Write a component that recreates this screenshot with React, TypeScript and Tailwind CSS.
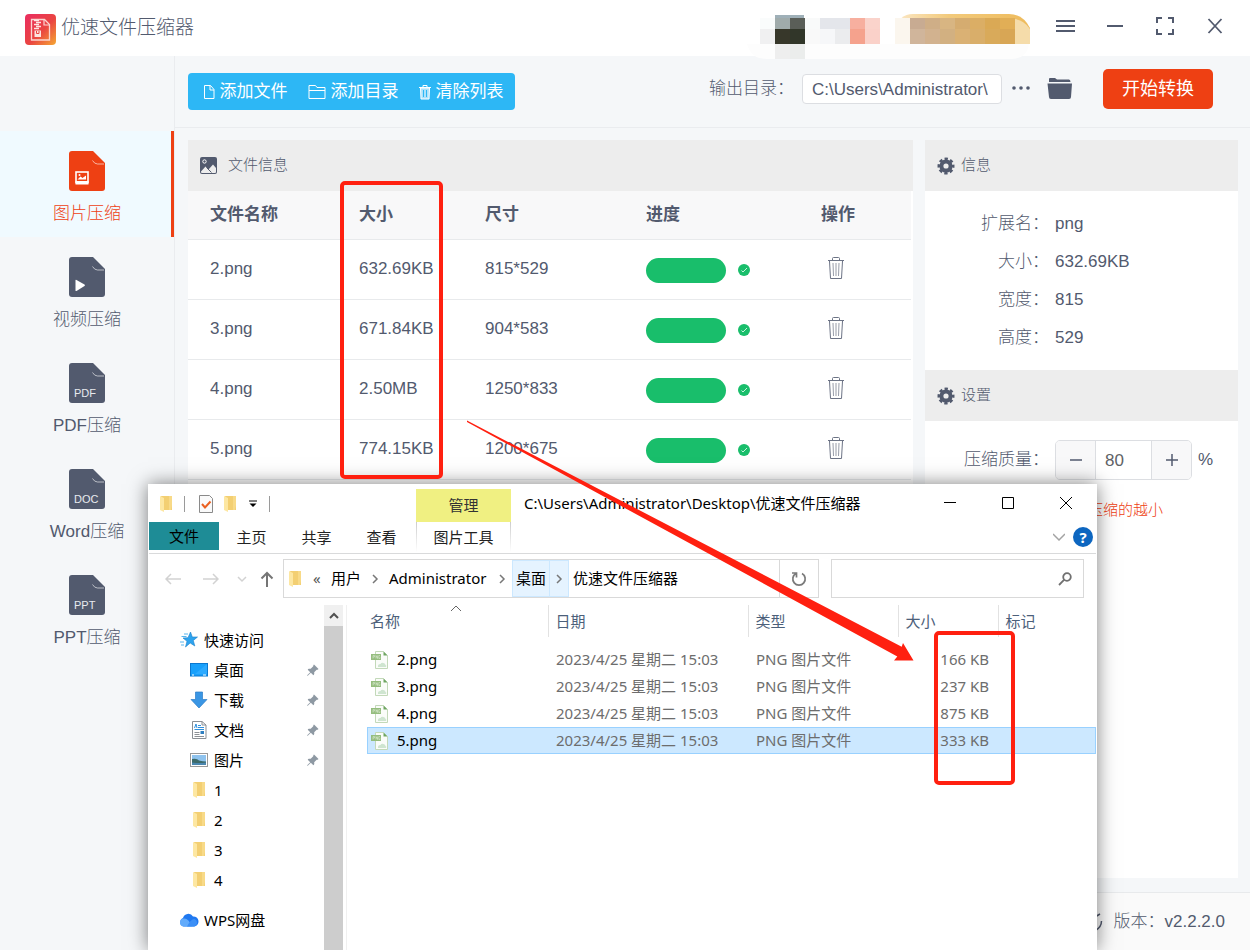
import type { ReactNode } from "react";
import { BsPinAngleFill } from "react-icons/bs";

const APP_FONT = "font-['Liberation_Sans','Noto_Sans_CJK_SC',sans-serif]";
const EXPLORER_FONT = "font-['Noto_Sans','Noto_Sans_CJK_SC',sans-serif]";

const NAV_ITEMS = [
  { label: "图片压缩", kind: "image", active: true },
  { label: "视频压缩", kind: "video", active: false },
  { label: "PDF压缩", kind: "PDF", active: false },
  { label: "Word压缩", kind: "DOC", active: false },
  { label: "PPT压缩", kind: "PPT", active: false },
];

const FILES = [
  { name: "2.png", size: "632.69KB", dims: "815*529" },
  { name: "3.png", size: "671.84KB", dims: "904*583" },
  { name: "4.png", size: "2.50MB", dims: "1250*833" },
  { name: "5.png", size: "774.15KB", dims: "1200*675" },
];

const INFO = [
  { label: "扩展名：", value: "png" },
  { label: "大小：", value: "632.69KB" },
  { label: "宽度：", value: "815" },
  { label: "高度：", value: "529" },
];

const RESULTS = [
  { name: "2.png", size: "166 KB", selected: false },
  { name: "3.png", size: "237 KB", selected: false },
  { name: "4.png", size: "875 KB", selected: false },
  { name: "5.png", size: "333 KB", selected: true },
];

const MOSAIC = [
  { x: 15, y: 4, w: 15, h: 11, c: "#fafcfc" },
  { x: 30, y: 4, w: 15, h: 11, c: "#a0abab" },
  { x: 45, y: 4, w: 15, h: 11, c: "#5a5e58" },
  { x: 60, y: 4, w: 15, h: 11, c: "#f9fafa" },
  { x: 75, y: 4, w: 30, h: 11, c: "#e4e6eb" },
  { x: 105, y: 4, w: 15, h: 11, c: "#f7af9f" },
  { x: 120, y: 4, w: 15, h: 11, c: "#fad3cb" },
  { x: 15, y: 15, w: 15, h: 15, c: "#f0f0f1" },
  { x: 30, y: 15, w: 15, h: 15, c: "#37372a" },
  { x: 45, y: 15, w: 15, h: 15, c: "#313629" },
  { x: 60, y: 15, w: 15, h: 15, c: "#f9f9f9" },
  { x: 75, y: 15, w: 15, h: 15, c: "#f6f7f9" },
  { x: 90, y: 15, w: 15, h: 15, c: "#ebecee" },
  { x: 105, y: 15, w: 15, h: 15, c: "#f5a28d" },
  { x: 120, y: 15, w: 15, h: 15, c: "#fad1c9" },
  { x: 30, y: 30, w: 15, h: 15, c: "#eeeeee" },
  { x: 45, y: 30, w: 15, h: 15, c: "#ebedec" },
  { x: 150, y: 4, w: 15, h: 26, c: "#fbf6ee" },
  { x: 165, y: 4, w: 15, h: 11, c: "#c8ab92" },
  { x: 180, y: 4, w: 15, h: 11, c: "#cfae87" },
  { x: 195, y: 4, w: 15, h: 11, c: "#d8b582" },
  { x: 210, y: 4, w: 15, h: 11, c: "#d5ac70" },
  { x: 225, y: 4, w: 15, h: 11, c: "#dbae65" },
  { x: 240, y: 4, w: 15, h: 11, c: "#daa955" },
  { x: 255, y: 4, w: 15, h: 11, c: "#e1ae56" },
  { x: 165, y: 15, w: 15, h: 15, c: "#d0b59b" },
  { x: 180, y: 15, w: 15, h: 15, c: "#d2b28f" },
  { x: 195, y: 15, w: 15, h: 15, c: "#d2b081" },
  { x: 210, y: 15, w: 15, h: 15, c: "#dab174" },
  { x: 225, y: 15, w: 15, h: 15, c: "#d9ae6a" },
  { x: 240, y: 15, w: 15, h: 15, c: "#d9aa5a" },
  { x: 255, y: 15, w: 15, h: 15, c: "#d8a655" },
];

function Logo() {
  return (
    <svg width="31" height="31" viewBox="0 0 31 31" aria-hidden="true">
      <defs>
        <linearGradient id="logo" x1="0" y1="0" x2="1" y2="1">
          <stop offset="0.1" stopColor="#ea315c" />
          <stop offset="0.55" stopColor="#ea4541" />
          <stop offset="1" stopColor="#f5a833" />
        </linearGradient>
      </defs>
      <rect width="31" height="31" rx="4" fill="url(#logo)" />
      <path d="M6.500 5.500h13l5 5v15.500h-18z" fill="none" stroke="#fbd5d0" strokeWidth="1.300" />
      <path d="M19 5.500v5.500h5.500" fill="none" stroke="#fbd5d0" strokeWidth="1.200" />
      <path d="M9 6.500h5M11 8.500h5M9 10.500h5M11 12.500h5M9 14.500h5" stroke="#fde4e0" strokeWidth="1.400" />
      <path d="M9.500 16.500h6.500v6.500h-6.500z" fill="#fde4e0" />
      <path d="M11.500 17v2.500h2.500V17" fill="none" stroke="#ea4541" />
    </svg>
  );
}

function AccountMosaic() {
  return (
    <svg width="290" height="48" viewBox="0 0 290 48" className="shrink-0" aria-hidden="true">
      <defs>
        <linearGradient id="vip" x1="0" x2="1">
          <stop offset="0" stopColor="#fbe8c8" />
          <stop offset="0.4" stopColor="#f2ca7c" />
          <stop offset="1" stopColor="#eebb5c" />
        </linearGradient>
      </defs>
      <path d="M2 30h282q-2 15-18 15H22Q6 45 2 30z" fill="#fdfdfd" />
      <path d="M150 16Q154 0 168 0h96q14 0 21 14v16H150z" fill="url(#vip)" />
      <rect x="30" y="1" width="29" height="4" fill="#9fb0b8" />
      {MOSAIC.map((m) => (
        <rect key={`${m.x}-${m.y}`} x={m.x} y={m.y} width={m.w} height={m.h} fill={m.c} shapeRendering="crispEdges" />
      ))}
      <path d="M270 5q9 1 15 10v15h-15z" fill="#f5dcaa" />
    </svg>
  );
}

function NavIcon({ kind, active }: { kind: string; active: boolean }) {
  return (
    <svg width="36" height="40" viewBox="0 0 36 40" aria-hidden="true">
      <path
        d="M3 0h21l12 12v25a3 3 0 0 1-3 3H3a3 3 0 0 1-3-3V3a3 3 0 0 1 3-3z"
        fill={active ? "#ee4013" : "#525a6e"}
      />
      <path d="M23.500 9.500q2 3.500 5 3.500h6.500" fill="none" stroke="#fff" strokeOpacity="0.600" />
      {kind === "image" && (
        <>
          <rect x="7" y="21" width="12" height="10.500" fill="none" stroke="#fff" strokeWidth="1.600" />
          <rect x="6.500" y="30" width="13" height="3.500" fill="#fff" />
          <path d="M8.500 28.500l3-3 2 1.500 3.500-2.500v4z" fill="#fff" />
          <circle cx="10.500" cy="24" r="1" fill="#fff" />
        </>
      )}
      {kind === "video" && <path d="M6.500 23.500q0-1 1-.5l8 4.500q1 .7 0 1.400l-8 5q-1 .4-1-.5z" fill="#fff" />}
      {kind.length === 3 && (
        <text x="5" y="34" fontSize="11" fill="#e8eaee">
          {kind}
        </text>
      )}
    </svg>
  );
}

function FileIcon() {
  return (
    <svg width="12" height="16" viewBox="0 0 12 16" fill="none" stroke="currentColor" aria-hidden="true">
      <path d="M1.500 1.500h6l3.500 4v9h-9.500zM7 1.500v4.500h4" />
    </svg>
  );
}

function FolderLineIcon() {
  return (
    <svg width="18" height="16" viewBox="0 0 18 16" fill="none" stroke="currentColor" aria-hidden="true">
      <path d="M1 1.500h6.500l1.500 2h8v11H1zM1 6.500h16" />
    </svg>
  );
}

function ClearIcon() {
  return (
    <svg width="12" height="16" viewBox="0 0 12 16" fill="none" stroke="currentColor" aria-hidden="true">
      <path d="M0 3.500h12M4 3.500v-2h4v2" />
      <path d="M1.500 4h9l-.5 11H2z" fill="currentColor" fillOpacity="0.600" />
      <path d="M4.500 6v7M7.500 6v7" stroke="#2db7f5" />
    </svg>
  );
}

function TrashIcon() {
  return (
    <svg width="18" height="24" viewBox="0 0 18 24" fill="none" stroke="#6c7385" aria-hidden="true">
      <path d="M1 4.500h16M5.500 4V2.500q0-1 1-1h5q1 0 1 1V4M2.500 5l1 17.500h11l1-17.500" />
      <path d="M6 7l.5 13M9 7v13M12 7l-.5 13" strokeOpacity="0.700" />
    </svg>
  );
}

function DoneIcon() {
  return (
    <svg width="12" height="12" viewBox="0 0 12 12" aria-hidden="true">
      <circle cx="6" cy="6" r="6" fill="#19be6b" />
      <path d="M3.500 6.500l1.500 1.500 4-4" fill="none" stroke="#c9f2dc" />
    </svg>
  );
}

function GearIcon() {
  return (
    <svg width="18" height="18" viewBox="0 0 18 18" fill="none" stroke="currentColor" aria-hidden="true">
      <circle cx="9" cy="9" r="4.600" strokeWidth="4" />
      <circle cx="9" cy="9" r="7.200" strokeWidth="2.600" strokeDasharray="3.300 2.355" strokeDashoffset="1.650" />
    </svg>
  );
}

function PictureIcon() {
  return (
    <svg width="17" height="17" viewBox="0 0 17 17" aria-hidden="true">
      <rect width="17" height="17" rx="2" fill="#525a6e" />
      <circle cx="4.500" cy="4.500" r="1.700" fill="none" stroke="#fff" />
      <path d="M1 14.500l4.500-5 3 3L13 7.500l3 3.500v4q0 1-1 1H2q-1 0-1-1z" fill="#ededed" />
      <path d="M6.500 10.500l5 5" stroke="#525a6e" />
    </svg>
  );
}

function FolderIcon() {
  return (
    <svg width="12" height="18" viewBox="0 0 12 18" aria-hidden="true">
      <path d="M1 1h11v14H4z" fill="#f3cf72" />
      <path d="M9 1h3v9l-1 5H9z" fill="#f8da88" />
      <path d="M0 1l4 2v14l-4-2z" fill="#fde7a2" />
    </svg>
  );
}

function PngIcon() {
  return (
    <svg width="18" height="18" viewBox="0 0 18 18" className="shrink-0" aria-hidden="true">
      <path d="M4.500.5h8l4 4v13h-12z" fill="#fafcf9" stroke="#c3d9b9" />
      <path d="M12.500.5v4h4z" fill="#6fa562" />
      <path d="M7 16q-.5-3 2.500-3 1-2 3-1 2 .5 2 2 1.500.5.500 2z" fill="#cfe5d0" />
      <rect x="0" y="3" width="10" height="6" fill="#95bd7e" />
      <path d="M2 7.500v-3h1.500v1.500H2M5 7.500v-3l1.500 3v-3M9 4.500H7.800v3H9V6.300" fill="none" stroke="#dcebd3" strokeWidth="0.600" />
    </svg>
  );
}

function StarIcon() {
  return (
    <svg width="18" height="18" viewBox="0 0 18 18" aria-hidden="true">
      <path d="M10.500 1l1.800 5h5.200l-4.200 3.500 1.500 5.500-4.600-3L5.500 16l1.500-5.700L3 7l5-.3z" fill="#2da3ee" stroke="#1b7fc9" strokeWidth="0.600" />
      <path d="M4 3h4M1.500 5.500h5M0 11h4M1 14h3" stroke="#56b5ee" />
    </svg>
  );
}

function DesktopIcon() {
  return (
    <svg width="18" height="14" viewBox="0 0 18 14" aria-hidden="true">
      <rect x="0.500" y="0.500" width="17" height="12.500" fill="#18a0fb" stroke="#0b78d0" />
      <path d="M17 1v10H5z" fill="#2caaff" />
      <path d="M2 12h2M13 12h3" stroke="#fff" />
    </svg>
  );
}

function DownloadIcon() {
  return (
    <svg width="18" height="18" viewBox="0 0 18 18" aria-hidden="true">
      <path d="M5.500 1h7v7.500H17L9 17 1 8.500h4.500z" fill="#3a96e4" stroke="#2b7cc7" strokeWidth="0.700" />
    </svg>
  );
}

function DocumentIcon() {
  return (
    <svg width="18" height="18" viewBox="0 0 18 18" aria-hidden="true">
      <path d="M2.500.5h9.500l4 3.500v13.500H2.500z" fill="#fff" stroke="#8b8f94" />
      <path d="M12 .5V4h4" fill="none" stroke="#8b8f94" />
      <path d="M8 4.500h3M8 6.500h6M4.500 8.500h9.500" stroke="#2f8fdc" />
      <path d="M4.500 7l1.500-4 1 4" fill="none" stroke="#2f8fdc" />
      <path d="M4.500 11.500h5M4.500 13.500h5M4.500 15.500h9.500" stroke="#8d9196" />
      <rect x="10.500" y="10" width="3.500" height="3" fill="#2f7fc0" />
    </svg>
  );
}

function PhotoIcon() {
  return (
    <svg width="18" height="14" viewBox="0 0 18 14" aria-hidden="true">
      <rect x="0.500" y="0.500" width="17" height="13" fill="#fff" stroke="#999" />
      <rect x="2" y="2" width="14" height="10" fill="#8fc3ee" />
      <path d="M2 6q5-1 7 1.500 4 1 7 1V12H2z" fill="#3d6b6b" />
      <path d="M2 9.500q7 1 14 0V12H2z" fill="#4b87b0" />
    </svg>
  );
}

function CloudIcon() {
  return (
    <svg width="20" height="14" viewBox="0 0 20 14" aria-hidden="true">
      <path d="M4.500 13.500a4.500 4.500 0 0 1-.5-8.500A5.500 5.500 0 0 1 14 3.500a5 5 0 0 1 1 10z" fill="#1f78f0" />
      <path d="M4.500 13.500a4 4 0 0 1 1-8q4 0 7.500 8z" fill="#62abfb" />
      <path d="M8 13.500q4-8 7.500-7.500a4 4 0 0 1 0 7.500z" fill="#3b8ff6" />
    </svg>
  );
}

function Chevron({ d, className }: { d: string; className: string }) {
  return (
    <svg width="12" height="12" viewBox="0 0 12 12" fill="none" stroke="currentColor" strokeWidth="1.500" className={className} aria-hidden="true">
      <path d={d} />
    </svg>
  );
}

function PanelHeader({ icon, title, gap }: { icon: ReactNode; title: string; gap: string }) {
  return (
    <h2 className={`flex h-[51px] items-center bg-[#ededed] px-3 text-[15px] ${gap}`}>
      {icon}
      {title}
    </h2>
  );
}

function TitleBar() {
  const button = "flex h-10 w-[50px] items-center justify-center";
  return (
    <header className="relative flex h-14 items-start bg-white pr-[10px] pl-[25px] pt-[14px]">
      <div className="flex flex-1 items-start gap-[5px]">
        <Logo />
        <h1 className="text-[19px] leading-[27px]">优速文件压缩器</h1>
      </div>
      <AccountMosaic />
      <div className="-mt-2 ml-[5px] flex">
        <button className={button} aria-label="菜单">
          <svg width="20" height="14" viewBox="0 0 20 14" stroke="currentColor" strokeWidth="2"><path d="M1 2h19M1 7h19M1 12h19" /></svg>
        </button>
        <button className={button} aria-label="最小化">
          <svg width="16" height="14" viewBox="0 0 16 14" stroke="currentColor" strokeWidth="2"><path d="M0 7h16" /></svg>
        </button>
        <button className={button} aria-label="最大化">
          <svg width="20" height="20" viewBox="0 0 20 20" fill="none" stroke="currentColor" strokeWidth="2"><path d="M2 7V2h5M13 2h5v5M18 13v5h-5M7 18H2v-5" /></svg>
        </button>
        <button className={button} aria-label="关闭">
          <svg width="16" height="16" viewBox="0 0 16 16" stroke="currentColor" strokeWidth="1.800"><path d="M1.500 1l13 14M14.500 1l-13 14" /></svg>
        </button>
      </div>
    </header>
  );
}

function Sidebar() {
  return (
    <nav className="w-[175px] shrink-0 border-r border-[#eaecef] pt-[75px]">
      {NAV_ITEMS.map((item) => (
        <a
          key={item.label}
          href="#"
          className={`flex h-[106px] flex-col items-center border-r-[3px] pt-5 pl-[3px] text-[17px] leading-6 ${
            item.active ? "border-[#ee4013] bg-[#f0faff] text-[#ee4013]" : "border-transparent"
          }`}
        >
          <NavIcon kind={item.kind} active={item.active} />
          <span className="mt-[11px]">{item.label}</span>
        </a>
      ))}
    </nav>
  );
}

function Toolbar() {
  const tool = "flex w-[108px] items-center justify-center gap-[5px] text-[17px] font-normal";
  return (
    <div className="flex h-[72px] items-start border-b border-[#eaecef] px-[13px] pt-[13px]">
      <div className="mt-1 flex h-[37px] rounded-[4px] bg-[#2db7f5] pl-[3px] text-white">
        <button className={tool}><FileIcon />添加文件</button>
        <button className={tool}><FolderLineIcon />添加目录</button>
        <button className={tool}><ClearIcon />清除列表</button>
      </div>
      <div className="ml-auto flex items-center pr-6">
        <label htmlFor="output" className="text-[17px]">输出目录：</label>
        <input
          id="output"
          defaultValue="C:\Users\Administrator\"
          className="ml-2 h-[30px] w-[200px] rounded-[4px] border border-[#dcdee2] bg-white px-[9px] pt-[2px] text-[17px]"
        />
        <button className="ml-[10px]" aria-label="更多">
          <svg width="18" height="6" viewBox="0 0 18 6" fill="currentColor"><circle cx="2" cy="2" r="1.800" /><circle cx="9" cy="2" r="1.800" /><circle cx="16" cy="2" r="1.800" /></svg>
        </button>
        <button className="ml-[17px]" aria-label="打开目录">
          <svg width="26" height="22" viewBox="0 0 26 22" fill="currentColor"><path d="M3 0h5l2 1.500h12q1.500 0 1.500 2.500H2V1q0-1 1-1zM.5 5.500H25L24 19q0 2-2 2H4q-2 0-2-2z" /></svg>
        </button>
        <button className="ml-[30px] h-10 w-[110px] rounded-[5px] bg-[#ee4013] text-[18px] font-normal text-white">开始转换</button>
      </div>
    </div>
  );
}

function FileTable() {
  return (
    <section className="flex-1 bg-white">
      <PanelHeader icon={<PictureIcon />} title="文件信息" gap="gap-[11px]" />
      <div className="pr-[2px]">
        <table className="w-full table-fixed text-left text-[17px]">
          <colgroup>
            <col className="w-[149px]" />
            <col className="w-[126px]" />
            <col className="w-[161px]" />
            <col className="w-[175px]" />
            <col />
          </colgroup>
          <thead>
            <tr className="h-12 border-b border-[#e8eaec] bg-[#f8f8f9]">
              <th className="pl-[22px]">文件名称</th>
              <th className="pl-[22px]">大小</th>
              <th className="pl-[22px]">尺寸</th>
              <th className="pl-[22px]">进度</th>
              <th className="pl-[22px]">操作</th>
            </tr>
          </thead>
          <tbody>
            {FILES.map((f) => (
              <tr key={f.name} className="h-[60px] border-b border-[#e8eaec]">
                <td className="pl-[22px]">{f.name}</td>
                <td className="pl-[22px]">{f.size}</td>
                <td className="pl-[22px]">{f.dims}</td>
                <td className="pl-[22px]">
                  <div className="flex items-center gap-3 pt-[2px]">
                    <div className="h-[25px] w-20 rounded-full bg-[#19be6b]" />
                    <DoneIcon />
                  </div>
                </td>
                <td className="pl-7">
                  <button className="block pb-[3px]" aria-label="删除"><TrashIcon /></button>
                </td>
              </tr>
            ))}
          </tbody>
        </table>
      </div>
    </section>
  );
}

function SidePanel() {
  return (
    <aside className="w-[313px] shrink-0 bg-white text-[17px]">
      <PanelHeader icon={<GearIcon />} title="信息" gap="gap-[6px]" />
      <dl className="pt-[14px] pb-[13px]">
        {INFO.map((i) => (
          <div key={i.label} className="flex h-[38px] items-center">
            <dt className="w-[124px] text-right">{i.label}</dt>
            <dd className="pl-[6px]">{i.value}</dd>
          </div>
        ))}
      </dl>
      <PanelHeader icon={<GearIcon />} title="设置" gap="gap-[6px]" />
      <div className="flex items-center pt-[19px]">
        <label htmlFor="quality" className="w-[124px] text-right">压缩质量：</label>
        <div className="ml-[6px] flex h-10 w-[137px] overflow-hidden rounded-[5px] border border-[#dcdee2]">
          <button className="flex w-[39px] items-center justify-center bg-[#f8f8f9]" aria-label="减少">
            <svg width="12" height="12" viewBox="0 0 12 12" stroke="currentColor" strokeWidth="1.500"><path d="M0 6h12" /></svg>
          </button>
          <input id="quality" defaultValue="80" className="min-w-0 flex-1 border-x border-[#dcdee2] px-[9px] pt-[2px] text-[17px] text-[#606266]" />
          <button className="flex w-[39px] items-center justify-center bg-[#f8f8f9]" aria-label="增加">
            <svg width="12" height="12" viewBox="0 0 12 12" stroke="currentColor" strokeWidth="1.500"><path d="M0 6h12M6 0v12" /></svg>
          </button>
        </div>
        <span className="ml-[6px]">%</span>
      </div>
      <p className="pt-[19px] pl-[163px] text-[15px] text-[#ee4013]">压缩的越小</p>
    </aside>
  );
}

function TreeItem({ icon, label, pinned }: { icon: ReactNode; label: string; pinned?: boolean }) {
  return (
    <li className="flex h-[30px] items-center pl-[41px] pr-[5px]">
      <span className="flex w-[18px] shrink-0 justify-center">{icon}</span>
      <span className="ml-[6px] flex-1">{label}</span>
      {pinned && <BsPinAngleFill size={13} className="text-[#8e99a3]" />}
    </li>
  );
}

function ExplorerWindow() {
  const tab = "flex w-[65px] items-center justify-center";
  const control = "flex w-[58px] items-center justify-center";
  const col = "border-l border-[#e2e2e2] pl-[7px] font-normal";
  return (
    <section
      className={`absolute top-[484px] bottom-0 left-[148px] flex w-[949px] flex-col bg-white px-px text-[15px] font-normal text-black shadow-[0_0_18px_rgba(0,0,0,0.5)] ${EXPLORER_FONT}`}
    >
      <div className="flex h-[38px] items-end">
        <div className="flex h-full w-[267px] items-center pl-[11px] pt-[2px]">
          <FolderIcon />
          <span className="ml-3 h-4 w-px bg-[#9a9a9a]" />
          <svg width="16" height="20" viewBox="0 0 16 20" className="ml-[13px]" aria-hidden="true">
            <path d="M1.500 1.500h10l3 3v14h-13z" fill="#fafafa" stroke="#8a8a8a" />
            <path d="M4 10l3 3.500 5.500-6" fill="none" stroke="#ea6020" strokeWidth="2" />
          </svg>
          <span className="ml-[10px]"><FolderIcon /></span>
          <svg width="8" height="8" viewBox="0 0 8 8" className="ml-[13px]" aria-hidden="true">
            <path d="M0 1h8" stroke="#000" />
            <path d="M.5 3.500h7L4 7z" />
          </svg>
          <span className="ml-3 h-4 w-px bg-[#9a9a9a]" />
        </div>
        <div className="flex h-[33px] w-[95px] items-center justify-center bg-[#f0f082] text-[#333]">管理</div>
        <h2 className="flex h-full flex-1 items-center pl-[13px]">C:\Users\Administrator\Desktop\优速文件压缩器</h2>
        <div className="flex h-full pr-px">
          <button className={control} aria-label="最小化"><svg width="12" height="12" viewBox="0 0 12 12" stroke="#000"><path d="M0 5.500h12" /></svg></button>
          <button className={control} aria-label="最大化"><svg width="12" height="12" viewBox="0 0 12 12" stroke="#000" fill="none"><path d="M.5.5h11v11H.5z" /></svg></button>
          <button className={control} aria-label="关闭"><svg width="12" height="12" viewBox="0 0 12 12" stroke="#000"><path d="M0 0l12 12M12 0L0 12" /></svg></button>
        </div>
      </div>

      <div className="flex h-8 items-start border-b border-[#d9dadb] text-[#222]">
        <button className="h-7 w-[70px] bg-[#1e8c96] text-black">文件</button>
        <div className="flex h-[30px]">
          <button className={tab}>主页</button>
          <button className={tab}>共享</button>
          <button className={tab}>查看</button>
        </div>
        <button className="ml-[2px] h-[30px] w-[95px] bg-linear-to-b from-[#cccccc] to-white px-px">
          <span className="flex h-full items-center justify-center bg-white">图片工具</span>
        </button>
        <div className="ml-auto flex h-[30px] items-center gap-2 pr-[3px]">
          <Chevron d="M0 3l6 6 6-6" className="text-[#a3a3a3]" />
          <button className="h-5 w-5 rounded-full bg-[#0d66c0] text-[15px] leading-5 font-bold text-white">?</button>
        </div>
      </div>

      <div className="flex h-11 items-end">
        <div className="flex h-[39px] w-[134px] items-center pl-4 text-[#d2d2d2]">
          <svg width="16" height="12" viewBox="0 0 16 12" fill="none" stroke="currentColor" strokeWidth="1.500"><path d="M16 6H1M6 1L1 6l5 5" /></svg>
          <svg width="16" height="12" viewBox="0 0 16 12" fill="none" stroke="currentColor" strokeWidth="1.500" className="ml-[22px]"><path d="M0 6h15M10 1l5 5-5 5" /></svg>
          <svg width="10" height="8" viewBox="0 0 10 8" fill="none" stroke="currentColor" strokeWidth="1.500" className="ml-[18px]"><path d="M1 2l4 4 4-4" /></svg>
          <svg width="14" height="16" viewBox="0 0 14 16" fill="none" stroke="#757575" strokeWidth="2" className="ml-[13px]"><path d="M7 16V2M1.500 7.500L7 2l5.500 5.500" /></svg>
        </div>
        <div className="flex h-[39px] w-[536px] items-center border border-[#d9d9d9] pl-[5px]">
          <FolderIcon />
          <span className="ml-3 w-[18px] text-[#555]">«</span>
          <span>用户</span>
          <Chevron d="M4 2l4 4-4 4" className="mx-2 text-[#777]" />
          <span className="w-[107px]">Administrator</span>
          <Chevron d="M4 2l4 4-4 4" className="mr-1 text-[#777]" />
          <span className="flex h-full items-center border border-[#cce8ff] bg-[#e5f3ff] px-[3px]">桌面</span>
          <span className="flex h-full w-[19px] items-center justify-center border border-l-0 border-[#cce8ff] bg-[#e5f3ff]">
            <Chevron d="M4 2l4 4-4 4" className="text-[#777]" />
          </span>
          <span className="ml-1 flex-1">优速文件压缩器</span>
          <button className="flex h-full w-[39px] items-center justify-center border-l border-[#d9d9d9]" aria-label="刷新">
            <svg width="16" height="16" viewBox="0 0 16 16" fill="none" stroke="#7a7a7a" strokeWidth="1.700"><path d="M11 2.500A6.200 6.200 0 1 1 5 2.500M5.500 6.500V2H1" /></svg>
          </button>
        </div>
        <label className="ml-3 flex h-[39px] w-[253px] items-center border border-[#d9d9d9] pr-[11px]">
          <input aria-label="搜索" className="min-w-0 flex-1 px-2 outline-none" />
          <svg width="14" height="14" viewBox="0 0 14 14" fill="none" stroke="#707070" strokeWidth="1.800"><circle cx="9" cy="5" r="3.800" /><path d="M6.300 7.700L1 13" /></svg>
        </label>
      </div>

      <div className="flex min-h-0 flex-1 pt-[7px]">
        <div className="w-[175px] pt-5">
          <div className="flex h-[30px] items-center gap-[6px] pl-[31px]"><StarIcon />快速访问</div>
          <ul>
            <TreeItem icon={<DesktopIcon />} label="桌面" pinned />
            <TreeItem icon={<DownloadIcon />} label="下载" pinned />
            <TreeItem icon={<DocumentIcon />} label="文档" pinned />
            <TreeItem icon={<PhotoIcon />} label="图片" pinned />
            <TreeItem icon={<FolderIcon />} label="1" />
            <TreeItem icon={<FolderIcon />} label="2" />
            <TreeItem icon={<FolderIcon />} label="3" />
            <TreeItem icon={<FolderIcon />} label="4" />
          </ul>
          <div className="mt-[10px] flex h-[30px] items-center gap-[5px] pl-[30px]"><CloudIcon />WPS网盘</div>
        </div>
        <div className="flex w-[19px] flex-col bg-[#cdcdcd]">
          <span className="flex h-[21px] items-center justify-center bg-[#f0f0f0]">
            <Chevron d="M2 8l4-4 4 4" className="stroke-2 text-[#505050]" />
          </span>
        </div>
        <div className="ml-[3px] flex-1 border-l border-[#f0f0f0] pl-5">
          <table className="w-full table-fixed text-left">
            <colgroup>
              <col className="w-[181px]" />
              <col className="w-[200px]" />
              <col className="w-[150px]" />
              <col className="w-[100px]" />
              <col />
            </colgroup>
            <thead className="text-[#4c607a]">
              <tr className="h-8">
                <th className="relative pl-[3px] font-normal">
                  名称
                  <Chevron d="M1 8l5-5 5 5" className="absolute -top-[2px] left-[83px] stroke-1 text-[#666]" />
                </th>
                <th className={col}>日期</th>
                <th className={col}>类型</th>
                <th className={col}>大小</th>
                <th className={col}>标记</th>
              </tr>
            </thead>
            <tbody className="text-[#6d6d6d] before:block before:h-[9px]">
              {RESULTS.map((r) => (
                <tr key={r.name} className={`h-[27px] ${r.selected ? "bg-[#cce8ff] outline outline-[#99d1ff] -outline-offset-1" : ""}`}>
                  <td className="pl-1">
                    <div className="flex items-center gap-2 text-black"><PngIcon />{r.name}</div>
                  </td>
                  <td className="pl-2">2023/4/25 星期二 15:03</td>
                  <td className="pl-2">PNG 图片文件</td>
                  <td className="pr-[9px] text-right">{r.size}</td>
                  <td />
                </tr>
              ))}
            </tbody>
          </table>
        </div>
      </div>
    </section>
  );
}

function Annotations() {
  return (
    <div className="pointer-events-none absolute inset-0">
      <div className="absolute top-[181px] left-[340px] h-[298px] w-[103px] rounded-[5px] border-4 border-[#ff2010]" />
      <div className="absolute top-[631px] left-[934px] h-[154px] w-[81px] rounded-[5px] border-4 border-[#ff2010]" />
      <svg width="460" height="250" viewBox="460 415 460 250" className="absolute top-[415px] left-[460px]" aria-hidden="true">
        <path d="M467 420.500L901.700 646.700L903 643L913.500 660.500L894 660.500L897.300 656.500L467 422z" fill="#ff2010" />
      </svg>
    </div>
  );
}

export default function App() {
  return (
    <div className={`relative flex min-h-screen flex-col overflow-hidden bg-[#f5f7f9] font-light text-[#525a6e] ${APP_FONT}`}>
      <TitleBar />
      <div className="flex flex-1">
        <Sidebar />
        <div className="flex flex-1 flex-col">
          <Toolbar />
          <main className="flex flex-1 gap-3 pt-3 pr-3 pb-[14px] pl-[13px]">
            <FileTable />
            <SidePanel />
          </main>
          <footer className="flex h-[58px] items-center justify-end gap-2 border-t border-[#e8eaec] bg-[#fafafa] pr-[25px] text-[17px]">
            <svg width="20" height="20" viewBox="0 0 20 20" fill="none" stroke="currentColor" strokeWidth="1.500" aria-hidden="true">
              <path d="M15.500 9q0 6-6 9.500M9 5l5-3" />
            </svg>
            <span>版本：v2.2.2.0</span>
          </footer>
        </div>
      </div>
      <ExplorerWindow />
      <Annotations />
    </div>
  );
}
